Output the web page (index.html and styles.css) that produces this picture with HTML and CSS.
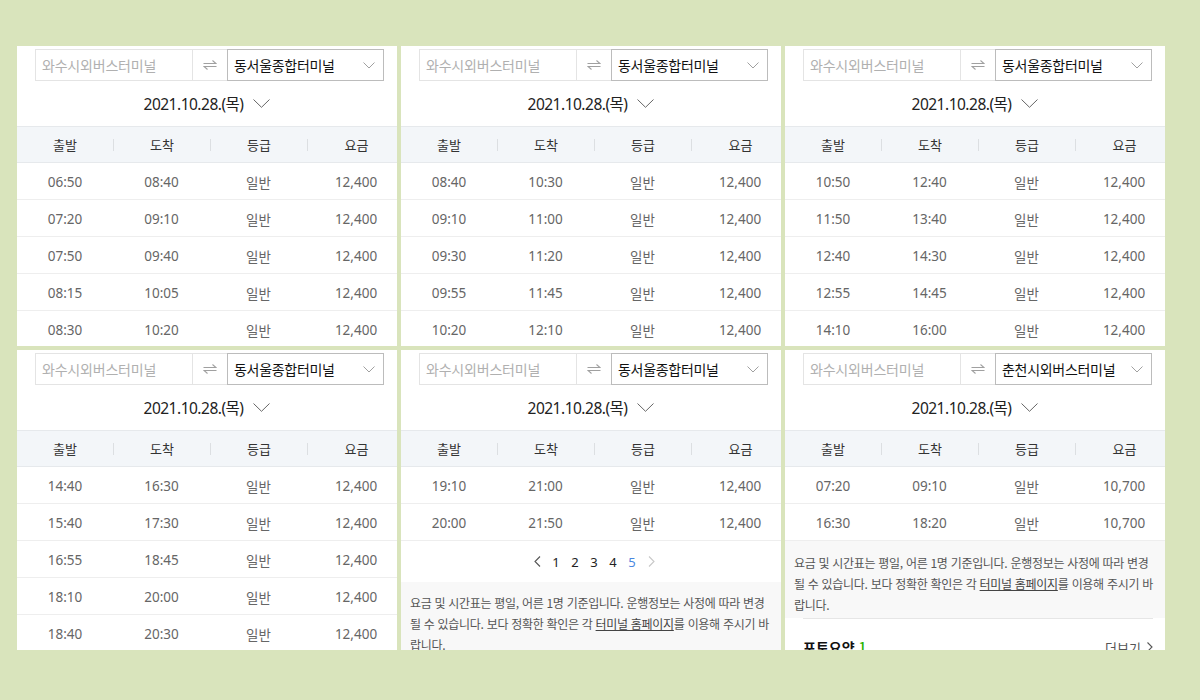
FILE: index.html
```html
<!DOCTYPE html>
<html lang="ko">
<head>
<meta charset="utf-8">
<title>시외버스 시간표</title>
<link rel="stylesheet" href="styles.css">
</head>
<body>
<div class="grid">

  <section class="panel">
    <div class="search">
      <div class="from">와수시외버스터미널</div>
      <div class="swap"><svg width="14" height="10" viewBox="0 0 14 10"><path d="M0.5 3.5H13L9.5 0.5M13.5 6.5H1L4.5 9.5" fill="none" stroke="#a0a0a0" stroke-width="1.1"/></svg></div>
      <div class="to"><span>동서울종합터미널</span><svg class="sel-chev" width="12" height="7" viewBox="0 0 12 7"><path d="M0.5 0.5L6 6L11.5 0.5" fill="none" stroke="#a0a0a0" stroke-width="1"/></svg></div>
    </div>
    <div class="date"><span>2021.10.28.(목)</span><svg width="17" height="9" viewBox="0 0 17 9"><path d="M0.5 0.5L8.5 8.3L16.5 0.5" fill="none" stroke="#666" stroke-width="1"/></svg></div>
    <div class="thead"><span>출발</span><span>도착</span><span>등급</span><span>요금</span></div>
    <div class="row"><span>06:50</span><span>08:40</span><span>일반</span><span>12,400</span></div>
    <div class="row"><span>07:20</span><span>09:10</span><span>일반</span><span>12,400</span></div>
    <div class="row"><span>07:50</span><span>09:40</span><span>일반</span><span>12,400</span></div>
    <div class="row"><span>08:15</span><span>10:05</span><span>일반</span><span>12,400</span></div>
    <div class="row"><span>08:30</span><span>10:20</span><span>일반</span><span>12,400</span></div>
  </section>

  <section class="panel">
    <div class="search">
      <div class="from">와수시외버스터미널</div>
      <div class="swap"><svg width="14" height="10" viewBox="0 0 14 10"><path d="M0.5 3.5H13L9.5 0.5M13.5 6.5H1L4.5 9.5" fill="none" stroke="#a0a0a0" stroke-width="1.1"/></svg></div>
      <div class="to"><span>동서울종합터미널</span><svg class="sel-chev" width="12" height="7" viewBox="0 0 12 7"><path d="M0.5 0.5L6 6L11.5 0.5" fill="none" stroke="#a0a0a0" stroke-width="1"/></svg></div>
    </div>
    <div class="date"><span>2021.10.28.(목)</span><svg width="17" height="9" viewBox="0 0 17 9"><path d="M0.5 0.5L8.5 8.3L16.5 0.5" fill="none" stroke="#666" stroke-width="1"/></svg></div>
    <div class="thead"><span>출발</span><span>도착</span><span>등급</span><span>요금</span></div>
    <div class="row"><span>08:40</span><span>10:30</span><span>일반</span><span>12,400</span></div>
    <div class="row"><span>09:10</span><span>11:00</span><span>일반</span><span>12,400</span></div>
    <div class="row"><span>09:30</span><span>11:20</span><span>일반</span><span>12,400</span></div>
    <div class="row"><span>09:55</span><span>11:45</span><span>일반</span><span>12,400</span></div>
    <div class="row"><span>10:20</span><span>12:10</span><span>일반</span><span>12,400</span></div>
  </section>

  <section class="panel">
    <div class="search">
      <div class="from">와수시외버스터미널</div>
      <div class="swap"><svg width="14" height="10" viewBox="0 0 14 10"><path d="M0.5 3.5H13L9.5 0.5M13.5 6.5H1L4.5 9.5" fill="none" stroke="#a0a0a0" stroke-width="1.1"/></svg></div>
      <div class="to"><span>동서울종합터미널</span><svg class="sel-chev" width="12" height="7" viewBox="0 0 12 7"><path d="M0.5 0.5L6 6L11.5 0.5" fill="none" stroke="#a0a0a0" stroke-width="1"/></svg></div>
    </div>
    <div class="date"><span>2021.10.28.(목)</span><svg width="17" height="9" viewBox="0 0 17 9"><path d="M0.5 0.5L8.5 8.3L16.5 0.5" fill="none" stroke="#666" stroke-width="1"/></svg></div>
    <div class="thead"><span>출발</span><span>도착</span><span>등급</span><span>요금</span></div>
    <div class="row"><span>10:50</span><span>12:40</span><span>일반</span><span>12,400</span></div>
    <div class="row"><span>11:50</span><span>13:40</span><span>일반</span><span>12,400</span></div>
    <div class="row"><span>12:40</span><span>14:30</span><span>일반</span><span>12,400</span></div>
    <div class="row"><span>12:55</span><span>14:45</span><span>일반</span><span>12,400</span></div>
    <div class="row"><span>14:10</span><span>16:00</span><span>일반</span><span>12,400</span></div>
  </section>

  <section class="panel">
    <div class="search">
      <div class="from">와수시외버스터미널</div>
      <div class="swap"><svg width="14" height="10" viewBox="0 0 14 10"><path d="M0.5 3.5H13L9.5 0.5M13.5 6.5H1L4.5 9.5" fill="none" stroke="#a0a0a0" stroke-width="1.1"/></svg></div>
      <div class="to"><span>동서울종합터미널</span><svg class="sel-chev" width="12" height="7" viewBox="0 0 12 7"><path d="M0.5 0.5L6 6L11.5 0.5" fill="none" stroke="#a0a0a0" stroke-width="1"/></svg></div>
    </div>
    <div class="date"><span>2021.10.28.(목)</span><svg width="17" height="9" viewBox="0 0 17 9"><path d="M0.5 0.5L8.5 8.3L16.5 0.5" fill="none" stroke="#666" stroke-width="1"/></svg></div>
    <div class="thead"><span>출발</span><span>도착</span><span>등급</span><span>요금</span></div>
    <div class="row"><span>14:40</span><span>16:30</span><span>일반</span><span>12,400</span></div>
    <div class="row"><span>15:40</span><span>17:30</span><span>일반</span><span>12,400</span></div>
    <div class="row"><span>16:55</span><span>18:45</span><span>일반</span><span>12,400</span></div>
    <div class="row"><span>18:10</span><span>20:00</span><span>일반</span><span>12,400</span></div>
    <div class="row"><span>18:40</span><span>20:30</span><span>일반</span><span>12,400</span></div>
  </section>

  <section class="panel">
    <div class="search">
      <div class="from">와수시외버스터미널</div>
      <div class="swap"><svg width="14" height="10" viewBox="0 0 14 10"><path d="M0.5 3.5H13L9.5 0.5M13.5 6.5H1L4.5 9.5" fill="none" stroke="#a0a0a0" stroke-width="1.1"/></svg></div>
      <div class="to"><span>동서울종합터미널</span><svg class="sel-chev" width="12" height="7" viewBox="0 0 12 7"><path d="M0.5 0.5L6 6L11.5 0.5" fill="none" stroke="#a0a0a0" stroke-width="1"/></svg></div>
    </div>
    <div class="date"><span>2021.10.28.(목)</span><svg width="17" height="9" viewBox="0 0 17 9"><path d="M0.5 0.5L8.5 8.3L16.5 0.5" fill="none" stroke="#666" stroke-width="1"/></svg></div>
    <div class="thead"><span>출발</span><span>도착</span><span>등급</span><span>요금</span></div>
    <div class="row"><span>19:10</span><span>21:00</span><span>일반</span><span>12,400</span></div>
    <div class="row"><span>20:00</span><span>21:50</span><span>일반</span><span>12,400</span></div>
    <div class="pager">
      <span class="pg-arrow"><svg width="7" height="11" viewBox="0 0 7 11"><path d="M6 0.5L1 5.5L6 10.5" fill="none" stroke="#555" stroke-width="1.1"/></svg></span>
      <span class="pg">1</span><span class="pg">2</span><span class="pg">3</span><span class="pg">4</span><span class="pg current">5</span>
      <span class="pg-arrow"><svg width="7" height="11" viewBox="0 0 7 11"><path d="M1 0.5L6 5.5L1 10.5" fill="none" stroke="#c8c8c8" stroke-width="1.1"/></svg></span>
    </div>
    <p class="notice">요금 및 시간표는 평일, 어른 1명 기준입니다. 운행정보는 사정에 따라 변경 될 수 있습니다. 보다 정확한 확인은 각 <a class="link">터미널 홈페이지</a>를 이용해 주시기 바랍니다.</p>
  </section>

  <section class="panel">
    <div class="search">
      <div class="from">와수시외버스터미널</div>
      <div class="swap"><svg width="14" height="10" viewBox="0 0 14 10"><path d="M0.5 3.5H13L9.5 0.5M13.5 6.5H1L4.5 9.5" fill="none" stroke="#a0a0a0" stroke-width="1.1"/></svg></div>
      <div class="to"><span>춘천시외버스터미널</span><svg class="sel-chev" width="12" height="7" viewBox="0 0 12 7"><path d="M0.5 0.5L6 6L11.5 0.5" fill="none" stroke="#a0a0a0" stroke-width="1"/></svg></div>
    </div>
    <div class="date"><span>2021.10.28.(목)</span><svg width="17" height="9" viewBox="0 0 17 9"><path d="M0.5 0.5L8.5 8.3L16.5 0.5" fill="none" stroke="#666" stroke-width="1"/></svg></div>
    <div class="thead"><span>출발</span><span>도착</span><span>등급</span><span>요금</span></div>
    <div class="row"><span>07:20</span><span>09:10</span><span>일반</span><span>10,700</span></div>
    <div class="row"><span>16:30</span><span>18:20</span><span>일반</span><span>10,700</span></div>
    <p class="notice tight">요금 및 시간표는 평일, 어른 1명 기준입니다. 운행정보는 사정에 따라 변경 될 수 있습니다. 보다 정확한 확인은 각 <a class="link">터미널 홈페이지</a>를 이용해 주시기 바랍니다.</p>
    <div class="photo">
      <strong class="photo-title">포토요약 <em class="count">1</em></strong>
      <span class="more">더보기 <svg width="6" height="10" viewBox="0 0 6 10"><path d="M0.5 0.5L5 5L0.5 9.5" fill="none" stroke="#555" stroke-width="1.1"/></svg></span>
    </div>
  </section>

</div>
</body>
</html>
```

FILE: styles.css
```css
* { box-sizing: border-box; }

body {
  margin: 0;
  background: #d9e4bc;
  font-family: "Noto Sans CJK KR", "Noto Sans", sans-serif;
  color: #222;
}

.grid {
  display: grid;
  grid-template-columns: repeat(3, 380px);
  grid-template-rows: 300px 300px;
  gap: 4px;
  padding: 46px 0 0 17px;
}

.panel {
  background: #fff;
  overflow: hidden;
}

/* search bar */
.search {
  display: flex;
  height: 32px;
  margin: 3px 13px 0 18px;
}
.from {
  width: 158px;
  border: 1px solid #e4e4e4;
  padding-left: 6px;
  font-size: 14px;
  line-height: 30px;
  color: #b0b0b0;
  letter-spacing: -0.2px;
  white-space: nowrap;
  overflow: hidden;
}
.swap {
  width: 34px;
  border-top: 1px solid #e4e4e4;
  border-bottom: 1px solid #e4e4e4;
  display: flex;
  align-items: center;
  justify-content: center;
}
.to {
  flex: 1;
  border: 1px solid #bcbcbc;
  padding: 0 8px 0 6px;
  display: flex;
  align-items: center;
  justify-content: space-between;
  font-size: 14px;
  font-weight: 400;
  color: #111;
  letter-spacing: -0.3px;
  white-space: nowrap;
}

/* date */
.date {
  height: 45px;
  display: flex;
  align-items: center;
  justify-content: center;
  gap: 10px;
  font-family: "Noto Sans", "Noto Sans CJK KR", sans-serif;
  font-size: 15.5px;
  letter-spacing: -0.5px;
  color: #222;
}

/* table */
.thead,
.row {
  display: grid;
  grid-template-columns: 96px 97px 97px 98px;
  width: 388px;
  height: 37px;
  align-items: center;
  text-align: center;
  font-size: 13px;
}
.thead {
  background: #f3f6f9;
  border-top: 1px solid #e6e9ec;
  border-bottom: 1px solid #e6e9ec;
  color: #333;
}
.thead span + span {
  border-left: 1px solid #dcdfe2;
  line-height: 12px;
}
.row {
  border-bottom: 1px solid #eeeeee;
  padding-top: 1px;
  color: #666;
  font-family: "Noto Sans", "Noto Sans CJK KR", sans-serif;
  font-size: 13.5px;
}

/* pagination */
.pager {
  height: 41px;
  display: flex;
  align-items: center;
  justify-content: center;
  padding-left: 6px;
}
.pg,
.pg-arrow {
  width: 19px;
  text-align: center;
  font-family: "Noto Sans", "Noto Sans CJK KR", sans-serif;
  font-size: 13px;
  color: #222;
  display: flex;
  justify-content: center;
  align-items: center;
}
.pg.current { color: #4a87e0; }

/* notice */
.notice {
  margin: 0;
  background: #f8f8f8;
  padding: 10px 8px 3px 9px;
  font-size: 12px;
  line-height: 21px;
  color: #555;
  letter-spacing: -0.3px;
}
.notice.tight { padding-top: 11px; }
.link {
  color: #444;
  text-decoration: underline;
}

/* photo summary */
.photo {
  margin: 0 12px 0 18px;
  border-top: 1px solid #e6e6e6;
  padding-top: 18px;
  display: flex;
  justify-content: space-between;
  align-items: center;
}
.photo-title {
  font-size: 14px;
  font-weight: 700;
  color: #111;
}
.count {
  font-style: normal;
  font-weight: 500;
  color: #2db400;
}
.more {
  font-size: 13px;
  color: #555;
  display: flex;
  align-items: center;
  gap: 6px;
}
```
